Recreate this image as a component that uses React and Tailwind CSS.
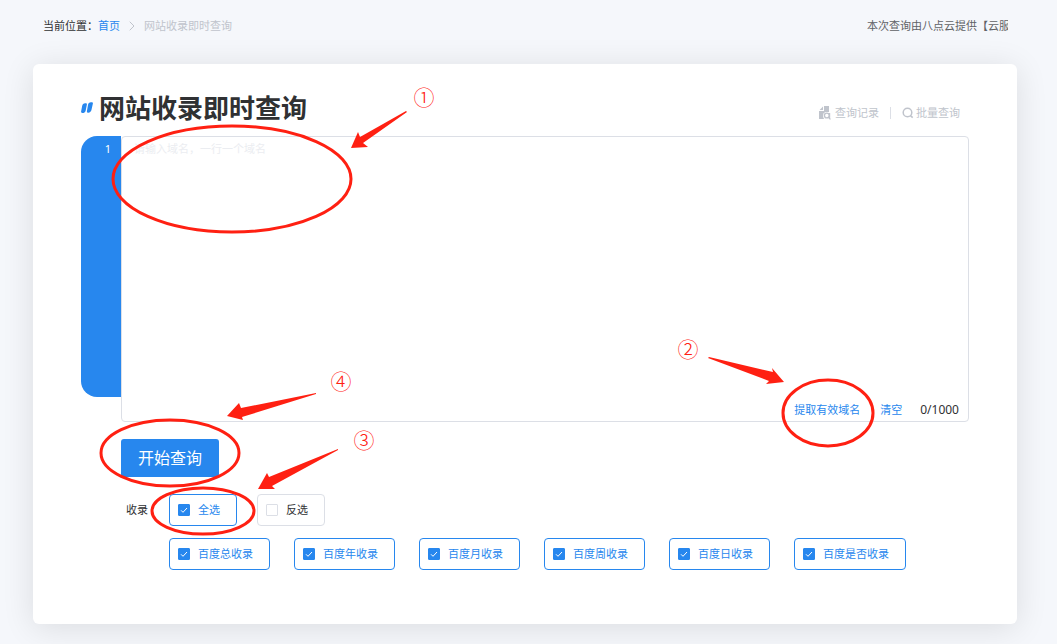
import React, { useState } from "react";
import { ChevronRight } from "lucide-react";

const MAX_DOMAINS = 1000;

const engineOptions = [
  { key: "total", label: "百度总收录" },
  { key: "year", label: "百度年收录" },
  { key: "month", label: "百度月收录" },
  { key: "week", label: "百度周收录" },
  { key: "day", label: "百度日收录" },
  { key: "indexed", label: "百度是否收录" },
];

const TitleMark = () => (
  <svg viewBox="0 0 12 12" className="h-3 w-3" fill="#2787ee" aria-hidden="true">
    <path d="M3.2 1.400C4.600.9 6.200 1 5.900 2.400L4.700 8.400C4.300 10.200 3 11 1.400 11 .3 11-.1 10.300.1 9.400L1.200 3.800C1.500 2.500 2.100 1.800 3.200 1.400Z" />
    <path d="M9 .6C10.600.1 12.200.2 11.900 1.600L10.500 7.800C10.100 9.500 9 10.700 7.400 10.800 6.200 10.900 5.700 10.100 5.900 9.200L7 3C7.300 1.700 7.900.9 9 .6Z" />
  </svg>
);

const RecordIcon = () => (
  <svg viewBox="0 0 12 14" className="h-3.5 w-3" fill="none" aria-hidden="true">
    <path d="M5 0h5v6H6.500A3.600 3.600 0 0 0 4 9.500c0 1.700.6 2.800 1.400 3.500H0V5h5Z" fill="#c0c4cc" />
    <path d="M4 .6V4H.6Z" fill="#c0c4cc" />
    <circle cx="7.800" cy="9.500" r="2.400" stroke="#c0c4cc" strokeWidth="1.400" />
    <path d="m9.500 11.300 2 2M10.600 7v6.300" stroke="#c0c4cc" strokeWidth="1.200" />
  </svg>
);

const BatchIcon = () => (
  <svg viewBox="0 0 12 12" className="h-3 w-3" fill="none" stroke="#c0c4cc" aria-hidden="true">
    <circle cx="5.500" cy="5.500" r="4.300" strokeWidth="1.500" />
    <path d="m8.300 8.500 2.400 2.200" strokeWidth="1.600" />
  </svg>
);

const Callout = ({ className, width, height, ellipse, arrow, label, x, y }) => (
  <svg
    viewBox={`0 0 ${width} ${height}`}
    className={`pointer-events-none absolute z-10 max-w-none overflow-visible ${className}`}
  >
    <ellipse {...ellipse} fill="none" stroke="#ff2012" strokeWidth="3" />
    <polygon points={arrow} fill="#ff2012" />
    <text x={x} y={y} textAnchor="middle" fill="#ff2012" className="font-['Noto_Sans_CJK_SC',sans-serif] text-[21px] font-light">
      {label}
    </text>
  </svg>
);

const CheckOption = ({ label, checked, onChange }) => (
  <label
    className={`flex h-8 cursor-pointer items-center gap-2 rounded border pr-4 pl-2 whitespace-nowrap ${
      checked ? "border-[#2787ee] text-[#2787ee]" : "border-[#dcdfe6] text-[#303133]"
    }`}
  >
    <span className="grid">
      <input
        type="checkbox"
        checked={checked}
        onChange={onChange}
        className="col-start-1 row-start-1 h-3 w-3 appearance-none rounded-[1px] border border-[#dcdfe6] bg-white checked:border-[#2787ee] checked:bg-[#2787ee]"
      />
      {checked && (
        <svg
          viewBox="0 0 12 12"
          className="pointer-events-none col-start-1 row-start-1 h-3 w-3"
          fill="none"
          stroke="white"
          strokeWidth="1"
        >
          <path d="m3 6.300 2 2 4-4.300" />
        </svg>
      )}
    </span>
    {label}
  </label>
);

const App = () => {
  const [domains, setDomains] = useState("");
  const [selected, setSelected] = useState(engineOptions.map((o) => o.key));
  const [inverted, setInverted] = useState(false);

  const lines = domains.split("\n");
  const count = lines.filter((line) => line.trim()).length;
  const allSelected = selected.length === engineOptions.length;

  const toggle = (key) => {
    setSelected((prev) =>
      prev.includes(key) ? prev.filter((k) => k !== key) : [...prev, key]
    );
  };

  const toggleAll = () => {
    setSelected(allSelected ? [] : engineOptions.map((o) => o.key));
  };

  const invert = () => {
    setInverted(!inverted);
    setSelected((prev) =>
      engineOptions.map((o) => o.key).filter((k) => !prev.includes(k))
    );
  };

  const extractDomains = () => {
    const found = domains.match(/[a-z0-9-]+(\.[a-z0-9-]+)+/gi) || [];
    setDomains(found.slice(0, MAX_DOMAINS).join("\n"));
  };

  return (
    <div className="min-h-screen bg-[#f5f7fb] pr-10 pb-5 pl-[33px] font-['Noto_Sans','Noto_Sans_CJK_SC',sans-serif] text-[11px] leading-4 text-[#303133]">
      <header className="flex h-16 items-start justify-between pt-[18px] pr-[9px] pl-[10px]">
        <nav className="flex items-center">
          <span>当前位置：</span>
          <a href="#" className="text-[#2787ee]">
            首页
          </a>
          <ChevronRight className="mx-1 h-4 w-4 text-[#c0c4cc]" strokeWidth={1.5} />
          <span className="text-[#c0c4cc]">网站收录即时查询</span>
        </nav>
        <p className="w-[141px] overflow-hidden whitespace-nowrap text-[#606266]">
          本次查询由八点云提供【云服
        </p>
      </header>

      <main className="rounded-md bg-white px-12 pt-[26px] pb-[54px] shadow-[0_4px_32px_rgba(0,0,0,0.11)]">
        <div className="mb-[10px] flex h-9 items-center justify-between">
          <div className="flex items-center gap-1.5">
            <TitleMark />
            <h1 className="text-[26px] leading-9 font-bold">网站收录即时查询</h1>
          </div>
          <div className="flex items-center self-end pr-[9px] pb-[5px] text-[#c0c4cc]">
            <a href="#" className="flex items-center gap-1">
              <RecordIcon />
              查询记录
            </a>
            <span className="mx-[11px] h-3 w-px bg-[#dcdfe6]" />
            <a href="#" className="flex items-center gap-0.5">
              <BatchIcon />
              批量查询
            </a>
          </div>
        </div>

        <div className="relative flex items-start">
          <div className="h-[261px] w-10 shrink-0 overflow-hidden rounded-l-2xl bg-[#2787ee] pt-[5px] pr-[10px] text-right text-white">
            {lines.map((_, i) => (
              <div key={i}>{i + 1}</div>
            ))}
          </div>
          <div className="flex h-[286px] flex-1 flex-col rounded border border-[#dcdfe6]">
            <textarea
              aria-label="域名"
              value={domains}
              onChange={(e) => setDomains(e.target.value)}
              placeholder="请输入域名，一行一个域名"
              className="w-full flex-1 resize-none px-3 pt-1 outline-none placeholder:text-[#ebedf1]"
            />
            <div className="flex items-center justify-end pr-[9px] pb-[3px]">
              <button type="button" onClick={extractDomains} className="text-[#2787ee]">
                提取有效域名
              </button>
              <button
                type="button"
                onClick={() => setDomains("")}
                className="mr-[18px] ml-5 text-[#2787ee]"
              >
                清空
              </button>
              <span className="text-xs">
                {count}/{MAX_DOMAINS}
              </span>
            </div>
          </div>
          <Callout
            className="-top-[50px] left-[29px] h-[148px] w-[326px]"
            width={326}
            height={148}
            ellipse={{ cx: 122, cy: 93, rx: 119, ry: 53 }}
            arrow="241,62 248,46 250,51 296,25 297,26 253,57 258,61"
            label="①"
            x={314}
            y={19}
          />
          <Callout
            className="right-[93px] -bottom-7 h-[114px] w-[202px]"
            width={202}
            height={114}
            ellipse={{ cx: 154, cy: 77, rx: 45, ry: 33 }}
            arrow="34,22 35,21 99,36 98,32 110,46 92,48 95,45"
            label="②"
            x={14}
            y={21}
          />
        </div>

        <div className="mt-[17px] flex pl-10">
          <div className="relative">
            <button
              type="button"
              className="block h-[38px] rounded-[3px] bg-[#2787ee] px-[17px] text-base text-white"
            >
              开始查询
            </button>
            <Callout
              className="-top-[71px] -left-[23px] h-[122px] w-[256px]"
              width={256}
              height={122}
              ellipse={{ cx: 72, cy: 85, rx: 69, ry: 33 }}
              arrow="129,48 141,35 143,40 218,25 218,26 144,49 145,52"
              label="④"
              x={243}
              y={21}
            />
          </div>
        </div>

        <div className="mt-[17px] flex items-start pl-[45px]">
          <span className="w-[43px] shrink-0 leading-8">收录</span>
          <div className="space-y-3">
            <div className="flex gap-5">
              <div className="relative">
                <CheckOption label="全选" checked={allSelected} onChange={toggleAll} />
                <Callout
                  className="-top-[66px] -left-[21px] h-[110px] w-[228px]"
                  width={228}
                  height={110}
                  ellipse={{ cx: 55, cy: 83, rx: 51, ry: 23 }}
                  arrow="110,61 119,45 121,49 190,21 190,22 124,58 127,61"
                  label="③"
                  x={216}
                  y={20}
                />
              </div>
              <CheckOption label="反选" checked={inverted} onChange={invert} />
            </div>
            <div className="flex flex-wrap gap-x-6 gap-y-3">
              {engineOptions.map((option) => (
                <CheckOption
                  key={option.key}
                  label={option.label}
                  checked={selected.includes(option.key)}
                  onChange={() => toggle(option.key)}
                />
              ))}
            </div>
          </div>
        </div>
      </main>
    </div>
  );
};

export default App;
